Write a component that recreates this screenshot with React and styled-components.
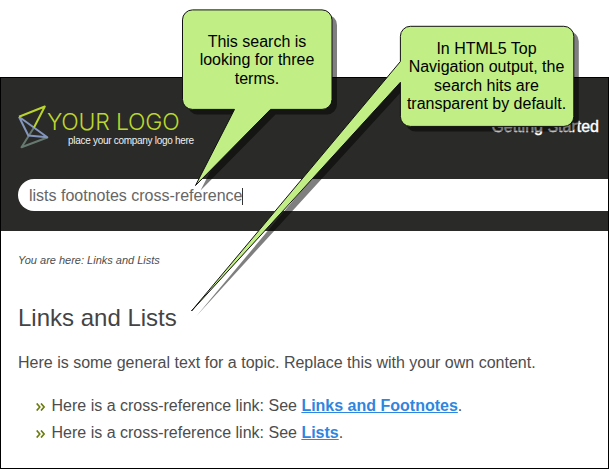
import React from "react";
import styled, { createGlobalStyle } from "styled-components";

const GlobalStyle = createGlobalStyle`
  * { box-sizing: border-box; }
  body { margin: 0; background: #fff; font-family: "Liberation Sans", Arial, sans-serif; }
`;

const Canvas = styled.div`
  position: relative;
  width: 609px;
  height: 469px;
  padding-top: 77px;
  overflow: hidden;
`;

const Frame = styled.div`
  height: 392px;
  border: 1px solid #000;
`;

const Header = styled.header`
  height: 153px;
  padding: 26px 0 0 17px;
  background: #2a2a28;
`;

const TopBar = styled.div`
  display: flex;
  justify-content: space-between;
  height: 75px;
  padding-right: 9px;
`;

const Logo = styled.div`
  display: flex;
`;

const Mark = styled.svg`
  width: 30px;
  height: 46px;
  flex: none;
  overflow: visible;
`;

const Wordmark = styled.div`
  display: flex;
  flex-direction: column;
  padding-top: 5px;
  white-space: nowrap;
`;

const LogoName = styled.span`
  margin-left: -1px;
  font: 300 23px/26px Inter, sans-serif;
  letter-spacing: -0.2px;
  color: #bdd62d;
`;

const Tagline = styled.span`
  margin-left: 20px;
  font: 10px/12px "Liberation Sans", Arial, sans-serif;
  letter-spacing: -0.29px;
  color: #f0f0ee;
`;

const NavItem = styled.span`
  padding-top: 13px;
  font-size: 16px;
  line-height: 20px;
  color: #fff;
  -webkit-text-stroke: 0.4px #fff;
  white-space: nowrap;
`;

const SearchField = styled.div`
  display: flex;
  align-items: center;
  height: 32px;
  padding: 2px 0 0 11px;
  border-radius: 16px 0 0 16px;
  background: #fff;
  font-size: 16px;
  color: #666;
`;

const Caret = styled.span`
  width: 1px;
  height: 17px;
  background: #333;
`;

const Content = styled.main`
  padding: 22px 17px 0;
  color: #4d4d4d;
`;

const Breadcrumb = styled.div`
  font-size: 11px;
  font-style: italic;
  line-height: 14px;
`;

const Title = styled.h1`
  margin: 37px 0 0;
  font-size: 24px;
  font-weight: 400;
  line-height: 28px;
  color: #444;
`;

const Paragraph = styled.p`
  margin: 21px 0 0;
  font-size: 16px;
  line-height: 20px;
`;

const List = styled.ul`
  margin: 19px 0 0;
  padding: 0 0 0 18px;
  list-style: none;
`;

const Item = styled.li`
  display: flex;
  align-items: center;
  height: 27px;
  font-size: 16px;
  white-space: pre;
`;

const Bullet = styled.svg`
  width: 9px;
  height: 8px;
  margin: 3px 6.5px 0 0;
  flex: none;
`;

const Link = styled.a`
  font-weight: 700;
  color: #2e86df;
  text-decoration: underline;
`;

const Bubbles = styled.svg`
  position: absolute;
  inset: 0;
  width: 609px;
  height: 469px;
`;

const CalloutText = styled.div`
  position: absolute;
  left: ${(p) => p.$x}px;
  top: ${(p) => p.$y}px;
  width: ${(p) => p.$w}px;
  display: flex;
  flex-direction: column;
  align-items: center;
  font-size: 16px;
  line-height: 18.4px;
  color: #000;
  white-space: nowrap;
`;

const bubbles = [
  "M192.5 9.9H322a10 10 0 0 1 10 10V99.4a10 10 0 0 1-10 10H270.5L195.5 185.5L234.5 109.4H192.5a10 10 0 0 1-10-10V19.9a10 10 0 0 1 10-10Z",
  "M410.4 26.3H563.8a10 10 0 0 1 10 10V116.4a10 10 0 0 1-10 10H410.4a10 10 0 0 1-10-10V82.3L191.5 311L400.4 61.5V36.3a10 10 0 0 1 10-10Z",
];

const items = ["Links and Footnotes", "Lists"];

export default function App() {
  return (
    <>
      <GlobalStyle />
      <Canvas>
        <Frame>
          <Header>
            <TopBar>
              <Logo>
                <Mark viewBox="0 0 30 46" fill="none" strokeWidth="2" strokeLinejoin="round">
                  <path d="M16 23.5L3.5 43.2L29.3 33.5" stroke="#667971" />
                  <path d="M1 12.8L10.3 31.5L29.3 33.3L1 12.8" stroke="#8496bd" />
                  <path d="M1 12.8L26.8 2.5L16 23.5" stroke="#bad42b" />
                </Mark>
                <Wordmark>
                  <LogoName>YOUR LOGO</LogoName>
                  <Tagline>place your company logo here</Tagline>
                </Wordmark>
              </Logo>
              <NavItem>Getting Started</NavItem>
            </TopBar>
            <SearchField>
              lists footnotes cross-reference
              <Caret />
            </SearchField>
          </Header>
          <Content>
            <Breadcrumb>You are here: Links and Lists</Breadcrumb>
            <Title>Links and Lists</Title>
            <Paragraph>Here is some general text for a topic. Replace this with your own content.</Paragraph>
            <List>
              {items.map((t) => (
                <Item key={t}>
                  <Bullet viewBox="0 0 9 8" fill="none" stroke="#6b7b0c" strokeWidth="1.6">
                    <path d="M.7.4L3.8 4L.7 7.6M5 .4L8.1 4L5 7.6" />
                  </Bullet>
                  Here is a cross-reference link: See <Link>{t}</Link>.
                </Item>
              ))}
            </List>
          </Content>
        </Frame>
        <Bubbles viewBox="0 0 609 469">
          {bubbles.map((d) => (
            <g key={d}>
              <path d={d} transform="translate(5 5)" fill="#000" fillOpacity="0.5" />
              <path d={d} fill="#c1ef85" stroke="#111" strokeWidth="1" strokeLinejoin="bevel" />
            </g>
          ))}
        </Bubbles>
        <CalloutText $x={182} $y={33} $w={150}>
          <span>This search is</span>
          <span>looking for three</span>
          <span>terms.</span>
        </CalloutText>
        <CalloutText $x={400} $y={40} $w={173}>
          <span>In HTML5 Top</span>
          <span>Navigation output, the</span>
          <span>search hits are</span>
          <span>transparent by default.</span>
        </CalloutText>
      </Canvas>
    </>
  );
}
